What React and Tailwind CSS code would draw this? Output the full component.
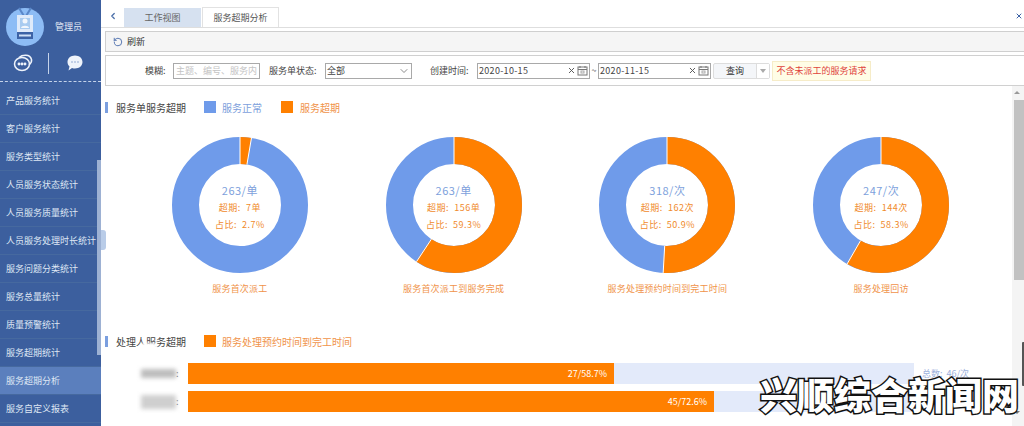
import { ChevronDown, ChevronLeft, RotateCcw, X } from "lucide-react"

const menu = [
  "产品服务统计", "客户服务统计", "服务类型统计", "人员服务状态统计", "人员服务质量统计", "人员服务处理时长统计",
  "服务问题分类统计", "服务总量统计", "质量预警统计", "服务超期统计", "服务超期分析", "服务自定义报表",
]

const donuts = [
  { total: "263/单", over: "超期:  7单", pct: 2.7, pctText: "占比:  2.7%", label: "服务首次派工" },
  { total: "263/单", over: "超期:  156单", pct: 59.3, pctText: "占比:  59.3%", label: "服务首次派工到服务完成" },
  { total: "318/次", over: "超期:  162次", pct: 50.9, pctText: "占比:  50.9%", label: "服务处理预约时间到完工时间" },
  { total: "247/次", over: "超期:  144次", pct: 58.3, pctText: "占比:  58.3%", label: "服务处理回访" },
]

const bars = [
  { width: "w-[426px]", text: "27/58.7%", total: "总数:  46/次", blob: "h-[9px] bg-[#bdbdbd]" },
  { width: "w-[526px]", text: "45/72.6%", total: "", blob: "h-[14px] bg-[#cfcfcf]" },
]

function Donut({ item }) {
  const r = 54.5
  const c = 2 * Math.PI * r
  const angle = (item.pct / 100) * 2 * Math.PI
  const endX = 68 + 68 * Math.sin(angle)
  const endY = 68 - 68 * Math.cos(angle)
  const innerX = 68 + 41 * Math.sin(angle)
  const innerY = 68 - 41 * Math.cos(angle)
  return (
    <div className="flex flex-col items-center">
      <div className="relative w-[136px] h-[136px]">
        <svg width="136" height="136" viewBox="0 0 136 136">
          <circle cx="68" cy="68" r={r} fill="none" stroke="#6f9bea" strokeWidth="27" />
          <circle
            cx="68"
            cy="68"
            r={r}
            fill="none"
            stroke="#ff8000"
            strokeWidth="27"
            strokeDasharray={`${(item.pct / 100) * c} ${c}`}
            transform="rotate(-90 68 68)"
          />
          <path d="M68 0V27" stroke="#fff" strokeWidth="1" />
          <path d={`M${endX} ${endY}L${innerX} ${innerY}`} stroke="#fff" strokeWidth="1" />
        </svg>
        <div className="absolute inset-0 pt-[4px] flex flex-col items-center justify-center">
          <div className="text-[11px] leading-[17px] tracking-[0.5px] text-[#7d9fdc]">{item.total}</div>
          <div className="text-[9px] leading-[17px] tracking-[0.5px] text-[#f08a2c] whitespace-pre">{item.over}</div>
          <div className="text-[9px] leading-[17px] tracking-[0.5px] text-[#f08a2c] whitespace-pre">{item.pctText}</div>
        </div>
      </div>
      <div className="mt-[9px] text-[9px] tracking-[0.2px] leading-[14px] text-[#f0934a] whitespace-nowrap">{item.label}</div>
    </div>
  )
}

function DateBox({ value }) {
  return (
    <div className="w-[113px] h-[16px] border border-[#a9a9a9] flex items-center pl-[1px] text-[9px] tracking-[0.3px] text-[#444]">
      <span className="flex-1">{value}</span>
      <X className="w-[9px] h-[9px] text-[#555]" strokeWidth={2.5} />
      <svg width="11" height="11" viewBox="0 0 11 11" className="mx-[1px]" fill="none" stroke="#777">
        <rect x="1" y="2" width="9" height="8" />
        <path d="M1 4.5H10M3 1V3M8 1V3" />
        <rect x="4" y="6" width="3" height="2" stroke="#aaa" />
      </svg>
    </div>
  )
}

export default function App() {
  return (
    <div className="relative w-[1024px] h-[426px] overflow-hidden flex bg-white font-['Noto_Sans_CJK_SC','Liberation_Sans',sans-serif]">
      {/* Sidebar */}
      <aside className="relative w-[101px] shrink-0 bg-[#3c5f9e]">
        <div className="h-[82px] border-b border-dashed border-[#c5d3ea]">
          <div className="h-[52px] flex items-start pl-[6px]">
            <svg width="38" height="46" viewBox="0 0 38 46" className="mt-[6px]">
              <circle cx="19" cy="21" r="19" fill="#8dbcf5" />
              <path d="M13 2L18 10M25 2L20 10" stroke="#5a87c8" strokeWidth="2" />
              <rect x="11" y="9" width="16" height="24" fill="#dfeafa" />
              <rect x="14" y="12" width="10" height="11" fill="#a9cbf0" />
              <circle cx="19" cy="15" r="2.5" fill="#f2f6fc" />
              <path d="M15 22C15 19 23 19 23 22Z" fill="#f2f6fc" />
              <rect x="11" y="26" width="16" height="7" fill="#3c62a6" />
              <rect x="13" y="28.5" width="12" height="2" fill="#cfe0f6" />
            </svg>
            <span className="ml-[11px] mt-[20px] text-[9px] text-[#e4ebf6] whitespace-nowrap">管理员</span>
          </div>
          <div className="h-[22px] flex items-center">
            <div className="w-[45px] flex justify-center">
              <svg width="20" height="18" viewBox="0 0 20 18" fill="none" stroke="#eef3fb" strokeWidth="1.5">
                <ellipse cx="9" cy="10" rx="7.5" ry="6.5" />
                <path d="M6 3.5C9 .8 17-.5 18.5 5.5C19 8 18 9.5 16 11" />
                <circle cx="6" cy="10" r=".7" />
                <circle cx="9" cy="10" r=".7" />
                <circle cx="12" cy="10" r=".7" />
              </svg>
            </div>
            <div className="w-[1px] h-[21px] bg-[#c5d3ea] ml-[3px]" />
            <div className="flex-1 flex justify-center">
              <svg width="16" height="16" viewBox="0 0 16 16">
                <path d="M8 0.5C12.3 0.5 15.5 3.3 15.5 7C15.5 10.7 12.3 13.5 8 13.5C7 13.5 6 13.4 5 13L1.5 15.5L2.5 11.5C1.2 10.3 0.5 8.8 0.5 7C0.5 3.3 3.7 0.5 8 0.5Z" fill="#eef3fb" />
                <circle cx="5" cy="7" r=".8" fill="#8aa3cc" />
                <circle cx="8" cy="7" r=".8" fill="#8aa3cc" />
                <circle cx="11" cy="7" r=".8" fill="#8aa3cc" />
              </svg>
            </div>
          </div>
        </div>
        <ul className="pt-[5px]">
          {menu.map((name) => (
            <li
              key={name}
              className={`h-[28px] pl-[6px] flex items-center border-b border-[#46699f] text-[9px] whitespace-nowrap text-[#dfe7f4] ${
                name === "服务超期分析" ? "bg-[#5b7fbd]" : ""
              }`}
            >
              {name}
            </li>
          ))}
        </ul>
        <div className="absolute right-0 top-[160px] w-[4px] h-[195px] bg-[#9db1d3]" />
        <div className="absolute right-[-5px] top-[230px] w-[5px] h-[20px] rounded-r-[3px] bg-[#b9cce8]" />
      </aside>

      {/* Main */}
      <main className="flex-1 min-w-0 flex flex-col">
        <div className="h-[28px] shrink-0 border-b border-[#dedede] flex items-end">
          <ChevronLeft className="w-[10px] h-[10px] ml-[7px] mb-[6px] text-[#4a6ea8]" strokeWidth={3} />
          <div className="ml-[6px] w-[77px] h-[19px] bg-[#d6e1f0] flex items-center justify-center text-[9px] text-[#666]">工作视图</div>
          <div className="ml-[1px] w-[77px] h-[20px] bg-white border border-b-0 border-[#e2e2e2] flex items-center justify-center text-[9px] text-[#555]">服务超期分析</div>
          <div className="flex-1" />
          <X className="w-[8px] h-[8px] mr-[1px] mb-[7px] text-[#3c62a6]" strokeWidth={3} />
        </div>
        <div className="h-[21px] mt-[3px] ml-[4px] shrink-0 bg-[#f5f5f5] border-y border-l border-[#cfcfcf] flex items-center pl-[7px] text-[9px] text-[#333]">
          <RotateCcw className="w-[10px] h-[10px] mr-[4px] text-[#3c62a6]" strokeWidth={2} />
          刷新
        </div>
        <div className="h-[31px] mt-[3px] ml-[4px] shrink-0 border-y border-l border-[#d0d0d0] flex items-center text-[9px] text-[#444] whitespace-nowrap">
          <span className="ml-[39px] w-[28px]">模糊:</span>
          <div className="w-[87px] h-[16px] border border-[#a9a9a9] pl-[2px] flex items-center text-[#c4c4c4]">主题、编号、服务内</div>
          <span className="ml-[9px] w-[56px]">服务单状态:</span>
          <div className="w-[87px] h-[16px] border border-[#a9a9a9] pl-[1px] flex items-center justify-between">
            全部
            <ChevronDown className="w-[12px] h-[12px] mr-[1px] text-[#666]" strokeWidth={1.5} />
          </div>
          <span className="ml-[18px] w-[47px]">创建时间:</span>
          <DateBox value="2020-10-15" />
          <span className="w-[8px] text-center">~</span>
          <DateBox value="2020-11-15" />
          <div className="ml-[2px] w-[57px] h-[16px] flex border border-[#dddddd] rounded-[2px] bg-[#f4f6f9]">
            <div className="w-[42px] flex items-center justify-center text-[#333]">查询</div>
            <div className="flex-1 border-l border-[#dddddd] bg-white flex items-center justify-center">
              <div className="w-0 h-0 border-x-[3px] border-x-transparent border-t-[4px] border-t-[#aaaaaa]" />
            </div>
          </div>
          <div className="ml-[2px] w-[99px] h-[20px] bg-[#fffde6] border border-[#f6ecc8] flex items-center justify-center text-[#e0433c]">不含未派工的服务请求</div>
        </div>

        <div className="relative flex-1 min-h-0 ml-[4px] pt-[15px]">
          <div className="flex items-center h-[12px]">
            <div className="w-[3px] h-[11px] bg-[#7b9fdf]" />
            <span className="ml-[8px] w-[88px] text-[10px] text-[#444] whitespace-nowrap">服务单服务超期</span>
            <div className="w-[12px] h-[12px] bg-[#6f9bea]" />
            <span className="ml-[6px] w-[59px] text-[10px] text-[#7d9fdc] whitespace-nowrap">服务正常</span>
            <div className="w-[12px] h-[12px] bg-[#ff8000]" />
            <span className="ml-[7px] text-[10px] text-[#f0934a] whitespace-nowrap">服务超期</span>
          </div>

          <div className="ml-[28px] mt-[24px] w-[855px] grid grid-cols-4">
            {donuts.map((item) => (
              <Donut key={item.label} item={item} />
            ))}
          </div>

          <div className="mt-[39px] flex items-center h-[12px]">
            <div className="w-[3px] h-[11px] bg-[#7b9fdf]" />
            <span className="relative ml-[8px] w-[88px] text-[10px] text-[#444] whitespace-nowrap">
              处理人服务超期
              <span className="absolute left-[25px] top-[9px] w-[16px] h-[8px] rounded-full bg-white blur-[1px]" />
            </span>
            <div className="w-[12px] h-[12px] bg-[#ff8000]" />
            <span className="ml-[6px] text-[10px] text-[#f0934a] whitespace-nowrap">服务处理预约时间到完工时间</span>
          </div>

          <div className="mt-[16px] flex flex-col gap-[7px]">
            {bars.map((bar) => (
              <div key={bar.text} className="flex items-center h-[21px]">
                <div className={`w-[35px] ml-[36px] ${bar.blob} blur-[2px]`} />
                <span className="w-[12px] text-[9px] text-[#777]">:</span>
                <div className="w-[726px] h-[21px] bg-[#e3eafa]">
                  <div className={`${bar.width} h-full bg-[#ff8000] flex items-center justify-end pr-[7px] text-[9px] text-white`}>{bar.text}</div>
                </div>
                <span className="ml-[8px] text-[9px] text-[#9db1dc] whitespace-pre">{bar.total}</span>
              </div>
            ))}
          </div>

          {/* Right scrollbar */}
          <div className="absolute right-0 top-0 bottom-0 w-[12px] bg-[#f4f4f4] flex flex-col items-end">
            <div className="mt-[5px] mr-[4px] w-0 h-0 border-x-[3px] border-x-transparent border-b-[3px] border-b-[#999999]" />
            <div className="mt-[6px] w-[10px] h-[180px] bg-[#c2c2c2]" />
            <div className="mt-[62px] w-[2px] h-[44px] rounded-l-[1px] bg-[#555555]" />
            <div className="mt-[25px] mr-[4px] w-0 h-0 border-x-[3px] border-x-transparent border-t-[3px] border-t-[#777777]" />
          </div>
        </div>
      </main>

      {/* Watermark */}
      <div className="absolute left-[760px] top-[369px] text-[37px] leading-[50px] font-black text-white [-webkit-text-stroke:3px_#111] [paint-order:stroke_fill] whitespace-nowrap">
        兴顺综合新闻网
      </div>
    </div>
  )
}
